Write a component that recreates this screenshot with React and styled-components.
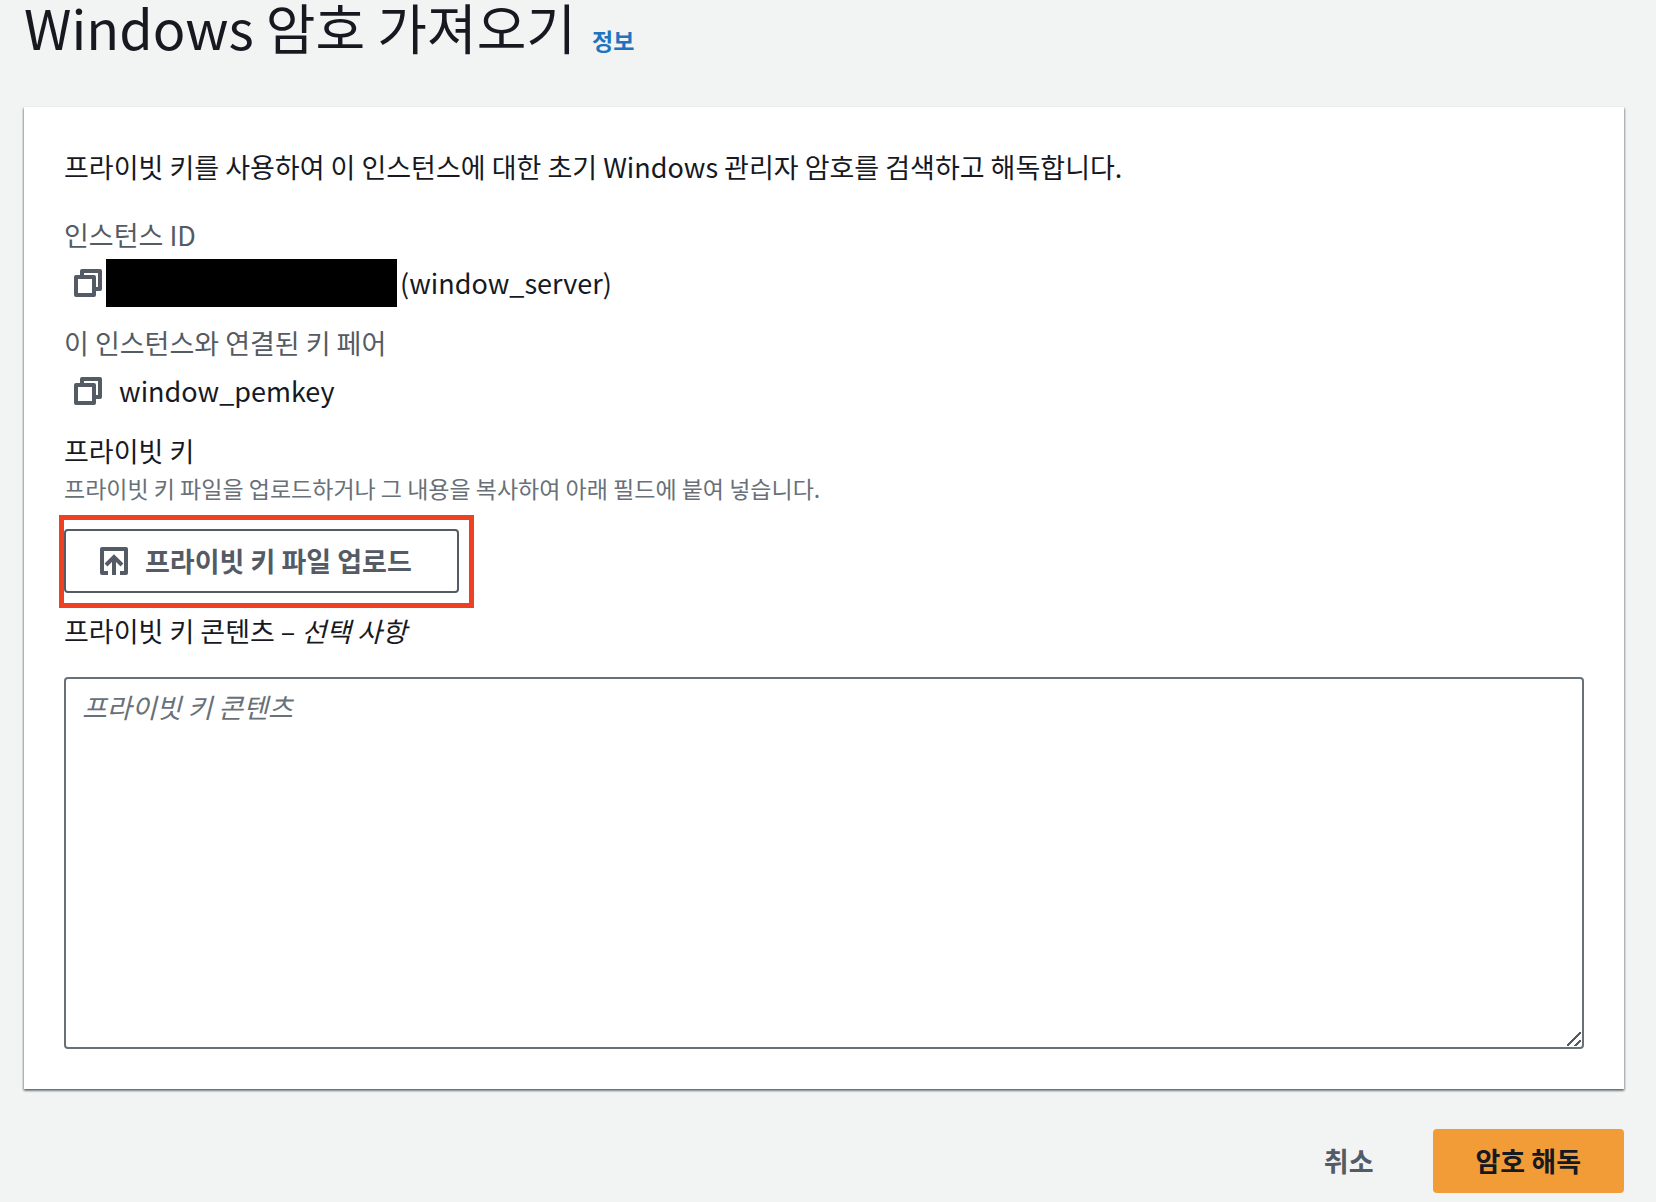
// src/pages/GetWindowsPassword.jsx

import React from "react";
import styled, { createGlobalStyle } from "styled-components";

////////////////////////////////////////////////////////////////////////////////
// GlobalStyle
////////////////////////////////////////////////////////////////////////////////
const GlobalStyle = createGlobalStyle`
  * {
    box-sizing: border-box;
  }

  body {
    margin: 0;
    background: #f2f3f3;
    color: #16191f;
    font-family: "Noto Sans CJK KR", "Noto Sans", sans-serif;
    font-size: 27px;
    line-height: 44px;
  }
`;

////////////////////////////////////////////////////////////////////////////////
// Page: 페이지 전체 래퍼
////////////////////////////////////////////////////////////////////////////////
const Page = styled.main`
  padding: 0 32px 8px 24px;
`;

const Header = styled.header`
  display: flex;
  align-items: baseline;
  gap: 16px;
  margin-bottom: 49px;
`;

const Title = styled.h1`
  margin: 0;
  font-size: 54px;
  font-weight: 400;
  line-height: 54px;
`;

const InfoLink = styled.a`
  color: #2074be;
  font-size: 23px;
  font-weight: 700;
  line-height: 36px;
  text-decoration: none;
`;

////////////////////////////////////////////////////////////////////////////////
// Card: 본문 컨테이너
////////////////////////////////////////////////////////////////////////////////
const Card = styled.section`
  padding: 38px 40px 40px;
  background: #fff;
  box-shadow:
    0 2px 2px rgba(0, 28, 36, 0.4),
    1px 1px 2px rgba(0, 28, 36, 0.25),
    -1px 1px 2px rgba(0, 28, 36, 0.25);
`;

const Intro = styled.p`
  margin: 0 0 24px;
`;

const Details = styled.dl`
  margin: 0;
`;

const Term = styled.dt`
  color: #545b64;
`;

const Value = styled.dd`
  display: flex;
  align-items: center;
  margin: 4px 0 16px;
  padding-left: 8px;
  height: 44px;
`;

const CopyButton = styled.button`
  display: flex;
  padding: 2px;
  border: 0;
  background: none;
  color: #545b64;
  cursor: pointer;
`;

const KeyName = styled.span`
  margin-left: 15px;
`;

// 가려진 인스턴스 ID
const Redacted = styled.span`
  width: 291px;
  height: 48px;
  margin: 0 3px 0 2px;
  background: #000;
`;

////////////////////////////////////////////////////////////////////////////////
// Form: 프라이빗 키 입력
////////////////////////////////////////////////////////////////////////////////
const FieldTitle = styled.div`
  line-height: 44px;
`;

const Hint = styled.p`
  margin: 0 0 26px;
  color: #687078;
  font-size: 23px;
  line-height: 30px;
`;

const UploadArea = styled.div`
  position: relative;
  width: fit-content;
  margin-bottom: 16px;

  /* 강조 표시 */
  &::after {
    content: "";
    position: absolute;
    inset: -14px -15px -15px -5px;
    border: 5px solid #ee4023;
    pointer-events: none;
  }
`;

const Button = styled.button`
  display: flex;
  align-items: center;
  gap: 17px;
  height: 64px;
  padding: 0 41px;
  border: 2px solid ${({ $border }) => $border || "transparent"};
  border-radius: 4px;
  background: ${({ $background }) => $background || "transparent"};
  color: ${({ $color }) => $color || "#545b64"};
  font: inherit;
  font-weight: 700;
  cursor: pointer;
`;

const UploadButton = styled(Button)`
  padding: 0 45px 0 34px;
`;

const Label = styled.label`
  display: block;
  margin-bottom: 24px;
`;

const KeyContents = styled.textarea`
  display: block;
  width: 100%;
  height: 372px;
  padding: 6px 16px;
  border: 2px solid #687078;
  border-radius: 4px;
  background: #fff;
  color: #16191f;
  font: inherit;
  resize: vertical;

  &::placeholder {
    color: #687078;
    font-style: italic;
  }

  &::-webkit-scrollbar {
    width: 18px;
    height: 18px;
  }

  /* 크기 조절 핸들 */
  &::-webkit-resizer {
    background: linear-gradient(
        135deg,
        transparent 46%,
        #545b64 46%,
        #545b64 54%,
        transparent 54%,
        transparent 75%,
        #545b64 75%,
        #545b64 83%,
        transparent 83%
      )
      0 0 / 14px 14px no-repeat;
  }
`;

////////////////////////////////////////////////////////////////////////////////
// Footer: 하단 버튼 영역
////////////////////////////////////////////////////////////////////////////////
const Footer = styled.footer`
  display: flex;
  justify-content: flex-end;
  gap: 16px;
  margin-top: 40px;
`;

const CopyIcon = () => (
  <svg width="28" height="28" viewBox="0 0 28 28" fill="none" stroke="currentColor" strokeWidth="4" strokeLinejoin="round" aria-hidden="true">
    <path d="M2 8h18v18H2z" />
    <path d="M8 8V2h18v18h-6" />
  </svg>
);

const UploadIcon = () => (
  <svg width="28" height="28" viewBox="0 0 28 28" fill="none" stroke="currentColor" strokeWidth="4" strokeLinejoin="round" aria-hidden="true">
    <path d="M8 26H2V2h24v24h-6" />
    <path d="M14 28V11M6 18l8-8 8 8" strokeLinejoin="miter" />
  </svg>
);

////////////////////////////////////////////////////////////////////////////////
// App 컴포넌트
////////////////////////////////////////////////////////////////////////////////
export default function App() {
  return (
    <Page>
      <GlobalStyle />

      <Header>
        <Title>Windows 암호 가져오기</Title>
        <InfoLink href="#info">정보</InfoLink>
      </Header>

      <Card>
        <Intro>
          프라이빗 키를 사용하여 이 인스턴스에 대한 초기 Windows 관리자 암호를 검색하고 해독합니다.
        </Intro>

        <Details>
          <Term>인스턴스 ID</Term>
          <Value>
            <CopyButton type="button" aria-label="인스턴스 ID 복사">
              <CopyIcon />
            </CopyButton>
            <Redacted />
            <span>(window_server)</span>
          </Value>

          <Term>이 인스턴스와 연결된 키 페어</Term>
          <Value>
            <CopyButton type="button" aria-label="키 페어 복사">
              <CopyIcon />
            </CopyButton>
            <KeyName>window_pemkey</KeyName>
          </Value>
        </Details>

        <FieldTitle>프라이빗 키</FieldTitle>
        <Hint>프라이빗 키 파일을 업로드하거나 그 내용을 복사하여 아래 필드에 붙여 넣습니다.</Hint>
        <UploadArea>
          <UploadButton type="button" $border="#545b64" $background="#fff">
            <UploadIcon />
            프라이빗 키 파일 업로드
          </UploadButton>
        </UploadArea>

        <Label htmlFor="key-contents">
          프라이빗 키 콘텐츠 – <em>선택 사항</em>
        </Label>
        <KeyContents id="key-contents" placeholder="프라이빗 키 콘텐츠" />
      </Card>

      <Footer>
        <Button type="button">취소</Button>
        <Button type="button" $background="#f29c38" $color="#16191f">
          암호 해독
        </Button>
      </Footer>
    </Page>
  );
}
